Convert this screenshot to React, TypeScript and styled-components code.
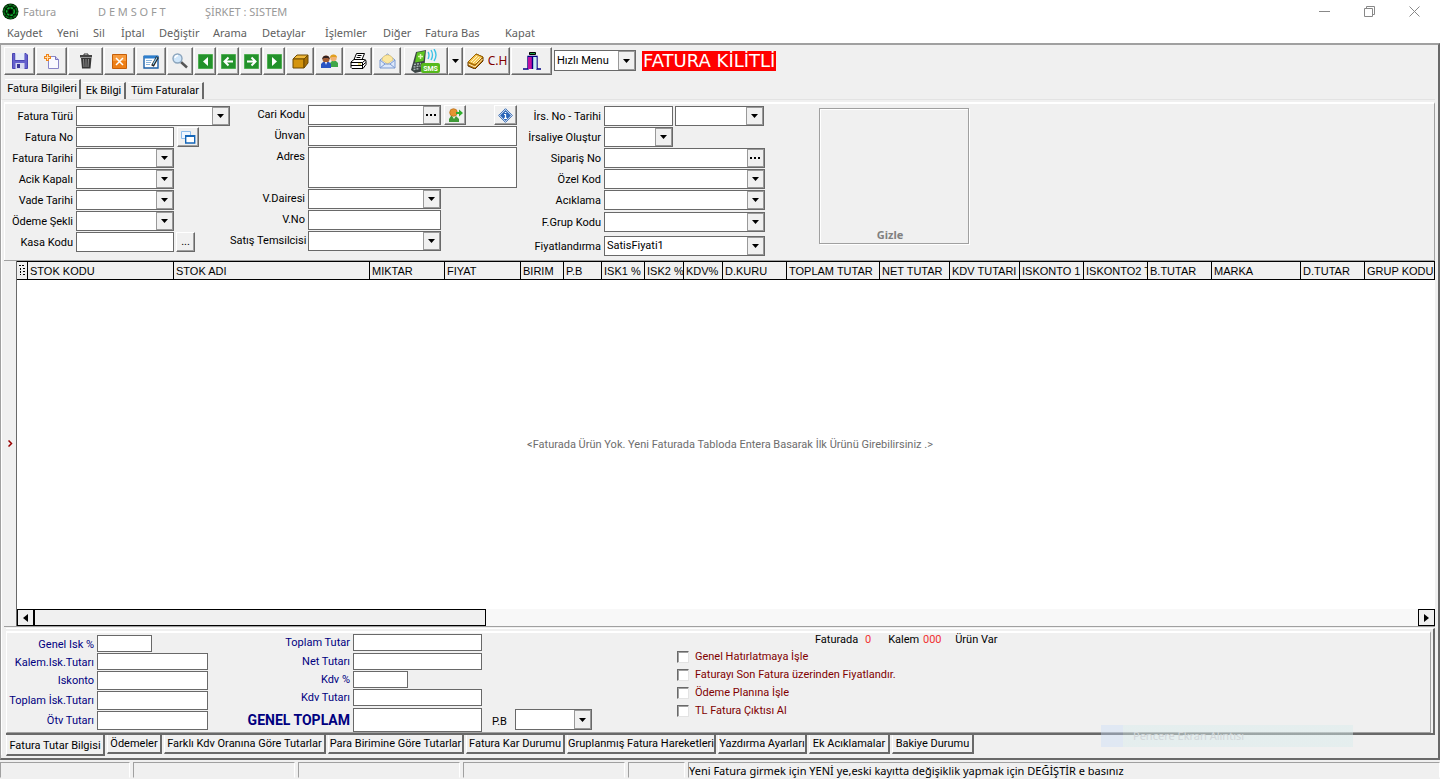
import React from "react";
import styled, { createGlobalStyle, css } from "styled-components";

const face = "#f0f0f0";
const edge = "#696969";
const shade = "#a0a0a0";
const sans = 'Roboto, "Liberation Sans", Arial, sans-serif';
const wide = '"Liberation Sans", Arial, sans-serif';
const ui = '"Noto Sans", "Open Sans", sans-serif';

const Global = createGlobalStyle`
  * { box-sizing: border-box; }
  body { margin: 0; background: #fff; font: 11px/14px ${sans}; color: #000; }
  button, input, select, textarea { font: inherit; color: inherit; margin: 0; padding: 0; border-radius: 0; }
  h1 { margin: 0; font-weight: 400; }
`;

const Window = styled.div`
  min-height: 100vh;
  display: flex;
  flex-direction: column;
  background: ${face};
  overflow: hidden;
  position: relative;
`;

const TitleBar = styled.header`
  display: flex;
  align-items: center;
  height: 23px;
  padding-left: 2px;
  background: #fff;
  color: #999;
  font: 11px/16px ${ui};
`;
const Title = styled.h1`
  display: flex;
  font-size: 11px;
  margin-left: 4px;
  flex: 1;
  white-space: pre;
`;
const TitlePart = styled.span<{ $w: number }>`
  width: ${(p) => p.$w}px;
  white-space: pre;
`;
const CaptionButton = styled.button`
  width: 45px;
  height: 22px;
  border: 0;
  background: none;
  display: flex;
  align-items: center;
  justify-content: center;
`;
const CaptionButtons = styled.div`
  display: flex;
  padding-right: 3px;
`;

const MenuBar = styled.nav`
  display: flex;
  height: 20px;
  padding-left: 7px;
  background: #fff;
`;
const MenuItem = styled.button<{ $w: number }>`
  width: ${(p) => p.$w}px;
  border: 0;
  background: none;
  color: #606060;
  font: 11px/18px ${ui};
  text-align: left;
  white-space: nowrap;
`;

const Frame = styled.main`
  flex: 1;
  display: flex;
  flex-direction: column;
  border-top: 2px solid ${shade};
  border-left: 1px solid ${shade};
  border-right: 2px solid ${edge};
  border-bottom: 2px solid ${edge};
`;

const ToolBar = styled.div`
  display: flex;
  height: 34px;
  padding: 2px 0 2px 3px;
  gap: 1px;
  align-items: stretch;
`;
const raised = css`
  background: ${face};
  border: 1px solid;
  border-color: #fff ${edge} ${edge} #fff;
  box-shadow: inset -1px -1px 0 ${shade};
`;
const ToolButton = styled.button<{ $w: number }>`
  ${raised}
  width: ${(p) => p.$w}px;
  height: 28px;
  display: flex;
  align-items: center;
  justify-content: center;
  gap: 4px;
  color: #800000;
  font: 12px/14px ${ui};
  flex: none;
`;
const ToolGroup = styled.div<{ $before?: number; $top?: number }>`
  display: flex;
  align-items: flex-start;
  margin-left: ${(p) => p.$before ?? 0}px;
  padding-top: ${(p) => p.$top ?? 0}px;
`;
const Locked = styled.strong`
  height: 20px;
  margin: 4px 0 0 5px;
  padding: 0 1px;
  background: #f00;
  color: #fff;
  font: 18px/20px "DejaVu Sans", Verdana, sans-serif;
  white-space: nowrap;
`;

const TopTabs = styled.div`
  display: flex;
  align-items: flex-end;
  height: 20px;
  padding-left: 4px;
  gap: 2px;
`;
const TopTab = styled.button<{ $w: number; $on?: boolean }>`
  width: ${(p) => p.$w}px;
  height: ${(p) => (p.$on ? 20 : 17)}px;
  padding-bottom: ${(p) => (p.$on ? 2 : 0)}px;
  border: 0;
  border-right: 2px solid ${edge};
  border-top: 1px solid #fff;
  background: ${face};
  white-space: nowrap;
`;

const Page = styled.section`
  flex: 1;
  display: flex;
  flex-direction: column;
  border-top: 1px solid #e3e3e3;
  border-left: 1px solid #fff;
  margin: 0 3px 3px 0;
`;
const Form = styled.form`
  display: flex;
  height: 158px;
  margin: 2px 0 0 2px;
  border-top: 2px solid #fff;
  border-left: 1px solid #fff;
  border-right: 1px solid ${shade};
`;
const Column = styled.div<{ $label: number; $rows: string; $before?: number; $top: number; $drop?: number }>`
  display: grid;
  grid-template-columns: ${(p) => p.$label}px max-content;
  grid-template-rows: ${(p) => p.$rows};
  column-gap: 3px;
  align-content: start;
  padding-top: ${(p) => p.$top}px;
  margin-left: ${(p) => p.$before ?? 0}px;
  > label {
    padding-top: ${(p) => p.$drop ?? 4}px;
  }
`;
const Label = styled.label`
  text-align: right;
  white-space: nowrap;
`;
const Controls = styled.div<{ $gap?: number }>`
  display: flex;
  align-items: flex-start;
  gap: ${(p) => p.$gap ?? 2}px;
`;
const TextBox = styled.input<{ $w: number; $h?: number }>`
  width: ${(p) => p.$w}px;
  height: ${(p) => p.$h ?? 20}px;
  border: 1px solid ${edge};
  background: #fff;
  padding: 0 2px;
`;
const TextArea = styled.textarea`
  width: 209px;
  height: 41px;
  border: 1px solid ${edge};
  resize: none;
  display: block;
`;
const PickWrap = styled.div<{ $w: number; $h?: number }>`
  position: relative;
  width: ${(p) => p.$w}px;
  height: ${(p) => p.$h ?? 20}px;
`;
const PickSelect = styled.select`
  width: 100%;
  height: 100%;
  appearance: none;
  border: 1px solid ${edge};
  background: #fff;
  padding-left: 2px;
`;
const PickArrow = styled.span`
  position: absolute;
  right: 1px;
  top: 1px;
  bottom: 1px;
  width: 17px;
  border: 1px solid #999;
  background: ${face};
  pointer-events: none;
  display: flex;
  align-items: center;
  justify-content: center;
`;
const LookupButton = styled.button`
  position: absolute;
  right: 1px;
  top: 1px;
  bottom: 1px;
  width: 17px;
  border: 1px solid #999;
  background: ${face};
  display: flex;
  align-items: center;
  justify-content: center;
`;
const SmallButton = styled.button<{ $w: number; $before?: number }>`
  ${raised}
  width: ${(p) => p.$w}px;
  height: 20px;
  margin-left: ${(p) => p.$before ?? 0}px;
  display: flex;
  align-items: center;
  justify-content: center;
`;
const Preview = styled.div`
  width: 150px;
  height: 136px;
  margin: 4px 0 0 54px;
  border: 1px solid ${shade};
  box-shadow: inset 1px 1px 0 #fff, 1px 1px 0 #fff;
  display: flex;
  align-items: flex-end;
  justify-content: center;
`;
const HideButton = styled.button`
  border: 0;
  background: none;
  color: #808080;
  padding-right: 8px;
  font: bold 11px/16px ${ui};
`;

const GridRow = styled.div`
  flex: 1;
  display: flex;
  margin-left: 2px;
  border-top: 1px solid ${shade};
  border-bottom: 1px solid ${shade};
`;
const Expander = styled.button`
  width: 12px;
  border: 0;
  background: ${face};
  display: flex;
  align-items: center;
  justify-content: center;
`;
const GridBox = styled.div`
  flex: 1;
  min-width: 0;
  display: flex;
  flex-direction: column;
  background: #fff;
  border-left: 1px solid ${edge};
  overflow: hidden;
`;
const Table = styled.table`
  width: 100%;
  table-layout: fixed;
  border-collapse: separate;
  border-spacing: 0;
  font-family: ${wide};
`;
const Th = styled.th`
  height: 19px;
  padding: 0 0 0 2px;
  border: solid #000;
  border-width: 1px 1px 1px 0;
  background: ${face};
  font-weight: 400;
  text-align: left;
  white-space: nowrap;
  overflow: hidden;
`;
const Empty = styled.p`
  flex: 1;
  margin: 0;
  padding-left: 8px;
  display: flex;
  align-items: center;
  justify-content: center;
  color: #6d6d6d;
`;
const ScrollBar = styled.div`
  display: flex;
  height: 17px;
  background: #f8f8f8;
`;
const ScrollButton = styled.button`
  width: 17px;
  border: 1px solid #000;
  background: ${face};
  display: flex;
  align-items: center;
  justify-content: center;
`;
const Thumb = styled.div`
  width: 452px;
  border: 1px solid #000;
  background: ${face};
`;
const Track = styled.div`
  flex: 1;
`;

const Totals = styled.form`
  display: flex;
  height: 107px;
  margin: 1px 0 0 4px;
  border-top: 1px solid #fff;
  border-bottom: 2px solid ${edge};
  border-right: 2px solid ${edge};
  padding: 2px 2px 0 0;
`;
const TotalsInner = styled.div`
  flex: 1;
  display: flex;
  border: 1px solid #fff;
  border-top-width: 2px;
  border-right-color: ${shade};
  border-bottom-color: ${shade};
`;
const Sums = styled(Column)`
  color: #000080;
`;
const GrandLabel = styled(Label)`
  font: bold 14px/20px ${sans};
`;
const Currency = styled.div`
  display: flex;
  align-items: flex-end;
  gap: 8px;
  margin-left: 10px;
  padding-bottom: 2px;
`;
const CurrencyLabel = styled.label`
  padding-bottom: 1px;
`;
const Options = styled.div`
  margin: 17px 0 0 85px;
  display: flex;
  flex-direction: column;
  gap: 4px;
  width: 138px;
  white-space: nowrap;
`;
const Option = styled.label`
  display: flex;
  gap: 6px;
  height: 14px;
  align-items: center;
  color: #800000;
`;
const Check = styled.input`
  appearance: none;
  flex: none;
  width: 12px;
  height: 12px;
  background: #fff;
  border: 1px solid;
  border-color: ${edge} #e3e3e3 #e3e3e3 ${edge};
  box-shadow: inset 1px 1px 0 ${shade};
`;
const Counter = styled.p`
  display: flex;
  margin: 0;
`;
const CountWord = styled.span<{ $before?: number }>`
  margin-left: ${(p) => p.$before ?? 0}px;
`;
const Red = styled.span<{ $w: number }>`
  color: #f03030;
  width: ${(p) => p.$w}px;
  text-align: center;
`;

const BottomTabs = styled.div`
  display: flex;
  height: 20px;
  padding-left: 4px;
  gap: 2px;
`;
const BottomTab = styled.button<{ $w: number; $on?: boolean }>`
  width: ${(p) => p.$w}px;
  height: ${(p) => (p.$on ? 21 : 19)}px;
  border: 0;
  border-left: 1px solid #fff;
  border-right: 2px solid ${edge};
  border-bottom: 2px solid ${edge};
  padding-top: ${(p) => (p.$on ? 3 : 0)}px;
  background: ${face};
  white-space: nowrap;
`;

const StatusBar = styled.footer`
  display: flex;
  gap: 3px;
  height: 19px;
  padding: 2px 0 1px;
  font: 11px/16px ${ui};
`;
const StatusCell = styled.div<{ $w?: number }>`
  ${(p) => (p.$w ? `width: ${p.$w}px` : "flex: 1")};
  border: 1px solid;
  border-color: ${shade} #fff ${face} ${shade};
  white-space: nowrap;
`;

const Toast = styled.div`
  position: absolute;
  right: 87px;
  bottom: 32px;
  width: 252px;
  height: 22px;
  padding-left: 32px;
  background: linear-gradient(90deg, #c8dcf866 22px, #d8ecec77 22px);
  color: #d2d7da;
  font: 11px/22px ${ui};
`;

const Down = () => (
  <svg width="7" height="4" viewBox="0 0 7 4" aria-hidden="true"><path d="M0 0h7L3.500 4z" fill="#000" /></svg>
);
const Dots = () => (
  <svg width="11" height="2" viewBox="0 0 11 2" aria-hidden="true"><path d="M0 0h2v2H0zM4 0h2v2H4zM8 0h2v2H8z" fill="#000" /></svg>
);

const LogoIcon = () => (
  <svg width="17" height="17" viewBox="0 0 17 17" aria-hidden="true">
    <circle cx="8.500" cy="8.500" r="8" fill="#020" />
    <circle cx="8.500" cy="8.500" r="6.500" fill="none" stroke="#0a7a20" strokeWidth="1.500" strokeDasharray="3 1" />
    <circle cx="8.500" cy="8.500" r="3.800" fill="none" stroke="#10b034" strokeWidth="1.500" strokeDasharray="2.500 1" />
    <circle cx="8.500" cy="8.500" r="1.800" fill="#000" />
  </svg>
);
const SaveIcon = () => (
  <svg width="16" height="16" viewBox="0 0 16 16" aria-hidden="true">
    <path d="M.5.500h2.500v7h9.500v-7h1.500l1.500 1.500v13.500H.5z" fill="#6460cc" stroke="#4a46b4" />
    <path d="M3.500 0h9v7h-9z" fill="#e6ecfa" />
    <path d="M3.500 10h9v6h-9z" fill="#d8daf0" />
    <path d="M5 11h3v4H5z" fill="#3a3698" />
  </svg>
);
const NewIcon = () => (
  <svg width="18" height="17" viewBox="0 0 18 17" aria-hidden="true">
    <path d="M5.500 3.500h7l3 3v9h-10z" fill="#fafaff" stroke="#8a86c8" />
    <path d="M12.500 3.500v3h3" fill="#c9c6ec" stroke="#7773bd" />
    <path d="M4.500 1v7M1 4.500h7" stroke="#f0861c" strokeWidth="3" />
    <path d="M4.500 2v5M2 4.500h5" stroke="#ffe0b0" />
  </svg>
);
const TrashIcon = () => (
  <svg width="14" height="16" viewBox="0 0 14 16" aria-hidden="true">
    <path d="M5 2V1h4v1" fill="none" stroke="#333" />
    <path d="M1 2h12v2.500H1z" fill="#444" />
    <path d="M2 5h10.500l-1 10.500h-8.500z" fill="#363636" />
    <path d="M4.500 6l.5 8M7 6v8M9.500 6L9 14" stroke="#8c8c8c" />
  </svg>
);
const CancelIcon = () => (
  <svg width="15" height="15" viewBox="0 0 15 15" aria-hidden="true">
    <path d="M.5.500h14v14H.5z" fill="#ee7f16" stroke="#c65f08" />
    <path d="M1 1h13v6H1z" fill="#f79a3c" />
    <path d="M4 4l7 7M11 4l-7 7" stroke="#fff" strokeWidth="1.500" />
  </svg>
);
const EditIcon = () => (
  <svg width="17" height="15" viewBox="0 0 17 15" aria-hidden="true">
    <path d="M1 2.500h14V14H1z" fill="#fff" stroke="#1b5fa8" strokeWidth="1.400" />
    <path d="M1 1.500h14v3H1z" fill="#2d7fce" />
    <path d="M3 6.500h6M3 8.500h5M3 10.500h4" stroke="#8ab4dc" />
    <path d="M14.500 3l-5 9" stroke="#222" strokeWidth="3" />
    <path d="M14 3.500l-4 7" stroke="#8fd0f8" strokeWidth="1.200" />
  </svg>
);
const SearchIcon = () => (
  <svg width="16" height="16" viewBox="0 0 16 16" aria-hidden="true">
    <path d="M9 9l6 5.500" stroke="#555" strokeWidth="2.500" />
    <circle cx="5.500" cy="5.500" r="4.500" fill="#cfe6fa" stroke="#8aa4bc" strokeWidth="1.400" />
    <path d="M3 5a3 3 0 013-2.500" stroke="#fff" fill="none" strokeWidth="1.400" />
  </svg>
);
const NavIcon = ({ d, line }: { d: string; line?: boolean }) => (
  <svg width="15" height="15" viewBox="0 0 15 15" aria-hidden="true">
    <path d="M.5.500h14v14H.5z" fill="#23922b" stroke="#4fae52" />
    <path d={d} fill={line ? "none" : "#fff"} stroke={line ? "#fff" : "none"} strokeWidth="2" />
  </svg>
);
const BoxIcon = () => (
  <svg width="17" height="15" viewBox="0 0 17 15" aria-hidden="true">
    <path d="M1 5l4-4h11l-4 4z" fill="#f0b93a" stroke="#6e4a00" />
    <path d="M1 5h11v9H1z" fill="#d4940c" stroke="#6e4a00" />
    <path d="M12 5l4-4v8l-4 5z" fill="#a66f04" stroke="#6e4a00" />
  </svg>
);
const PeopleIcon = () => (
  <svg width="17" height="15" viewBox="0 0 17 15" aria-hidden="true">
    <path d="M9 13V9l2-2h4l2 2v4z" fill="#3fa648" />
    <circle cx="12.500" cy="4" r="3.200" fill="#f0b070" />
    <path d="M9 4a3.500 3.500 0 017 0l-1-1h-4z" fill="#e0a020" />
    <path d="M0 14V10l2-2h6l2 2v4z" fill="#2854c4" />
    <circle cx="5" cy="5" r="3.500" fill="#a05a34" />
    <path d="M1.200 5.500a3.800 3.800 0 017.600 0L7 4H3z" fill="#302020" />
    <path d="M4 8l1 3 1-3z" fill="#fff" />
  </svg>
);
const PrintIcon = () => (
  <svg width="17" height="16" viewBox="0 0 17 16" aria-hidden="true">
    <path d="M6.500.500h8l-2.500 6H4z" fill="#fff" stroke="#000" />
    <path d="M7.500 2.500h4M6.500 4.500h4" stroke="#000" />
    <path d="M1 9l3-2.500h10l2 1v4l-3 4H2l-1-1z" fill="#fff" stroke="#000" />
    <path d="M1 9.500h11.500l3-2.500M1 12.500h11.500l3-3M12.500 9.500v6" stroke="#000" fill="none" />
    <path d="M8 11h3" stroke="#d8c000" />
  </svg>
);
const MailIcon = () => (
  <svg width="17" height="16" viewBox="0 0 17 16" aria-hidden="true">
    <path d="M1 7l7.500-6L16 7v8H1z" fill="#dce8fb" stroke="#7d9bd0" />
    <path d="M3 7c0-3 3-5 5.500-5S14 4 14 7l-5.500 4z" fill="#fbe7a0" stroke="#d8b860" strokeWidth=".6" />
    <path d="M1 7l5 4h5l5-4M1 15l5-4M16 15l-5-4" fill="none" stroke="#7d9bd0" />
  </svg>
);
const SmsIcon = () => (
  <svg width="32" height="25" viewBox="0 0 32 25" aria-hidden="true">
    <path d="M6 3l10-2-2 21-9 2-4-3z" fill="#3b4444" />
    <path d="M7 3.500l8-1.500-1.500 10-8.500 1.500z" fill="#5ec522" />
    <path d="M10.500 5v5M8 7.500h5" stroke="#dff7b8" strokeWidth="1.500" />
    <path d="M4 15.500l7-1M3.500 18l7-1M3.500 20.500l6-1" stroke="#a8b4b4" strokeWidth="1.500" strokeDasharray="2 1" />
    <path d="M18 3q2 3 0 7M21 1q3 5 0 10M24 0q4 6 0 12" fill="none" stroke="#3ec3e6" strokeWidth="1.400" />
    <rect x="11" y="14" width="19" height="10" rx="2" fill="#55b91c" />
    <text x="20.500" y="22" textAnchor="middle" fontFamily="Roboto, sans-serif" fontSize="7" fontWeight="700" fill="#fff">SMS</text>
  </svg>
);
const LedgerIcon = () => (
  <svg width="17" height="16" viewBox="0 0 17 16" aria-hidden="true">
    <path d="M1 9l8-8 7 3v4l-8 8-7-3z" fill="#c77f10" stroke="#5c3500" />
    <path d="M1 9l8-8 7 3-8 8z" fill="#f4c552" stroke="#9c6400" />
    <path d="M4 9l6-6M6 10l6-6M9 10l5-5" stroke="#fff3c0" />
    <path d="M1.500 11l6.500 3 7.500-8" fill="none" stroke="#fff3c0" />
  </svg>
);
const DoorIcon = () => (
  <svg width="18" height="18" viewBox="0 0 18 18" aria-hidden="true">
    <path d="M6.500.500h6v2h-6z" fill="#1aa040" stroke="#000" />
    <path d="M0 17h5V4.500h9V17h4" fill="none" stroke="#000080" strokeWidth="1.400" />
    <path d="M5 5h4v12H5z" fill="#c010a0" />
    <path d="M9.500 5h4v12h-4z" fill="#c8eef4" />
    <path d="M9.500 4.500V17" stroke="#000080" strokeWidth="1.400" />
  </svg>
);
const CopyIcon = () => (
  <svg width="15" height="13" viewBox="0 0 15 13" aria-hidden="true">
    <path d="M.5.500h9v7h-9z" fill="#eef6ff" stroke="#8cbcec" />
    <path d="M4.700 4.700h9v7.300h-9z" fill="#fff" stroke="#1466b8" strokeWidth="1.400" />
    <path d="M4 4h10v2H4z" fill="#1466b8" />
  </svg>
);
const AddUserIcon = () => (
  <svg width="15" height="15" viewBox="0 0 15 15" aria-hidden="true">
    <path d="M1 14v-3l2-3h5l3 3v3z" fill="#3f9a38" />
    <path d="M4 8l2 3 2-3z" fill="#e8f4e0" />
    <circle cx="5.500" cy="4.500" r="3.800" fill="#e59432" stroke="#b86c14" strokeWidth=".7" />
    <path d="M8 4h3V1.500L15 5l-4 3.500V6H8z" fill="#2fae2c" />
  </svg>
);
const InfoIcon = () => (
  <svg width="15" height="15" viewBox="0 0 15 15" aria-hidden="true">
    <path d="M7.500.7l6.800 6.800-6.800 6.800L.7 7.500z" fill="#fff" stroke="#2660b0" />
    <path d="M7.500 2l5.500 5.500-5.500 5.500L2 7.500z" fill="#2b66b8" />
    <path d="M6 6.500h1.500V10M6 10.300h3M6.800 4.500h1.500" stroke="#fff" fill="none" strokeWidth="1.200" />
  </svg>
);

type PickProps = { id?: string; w: number; h?: number; value?: string; label?: string };
const Pick = ({ id, w, h, value, label }: PickProps) => (
  <PickWrap $w={w} $h={h}>
    <PickSelect id={id} aria-label={label}>
      <option>{value ?? ""}</option>
    </PickSelect>
    <PickArrow><Down /></PickArrow>
  </PickWrap>
);
const Lookup = ({ id, w, label }: { id: string; w: number; label: string }) => (
  <PickWrap $w={w}>
    <TextBox id={id} $w={w} />
    <LookupButton type="button" aria-label={label}><Dots /></LookupButton>
  </PickWrap>
);

const menu: [string, number][] = [
  ["Kaydet", 50], ["Yeni", 36], ["Sil", 28], ["İptal", 38], ["Değiştir", 54], ["Arama", 49],
  ["Detaylar", 63], ["İşlemler", 58], ["Diğer", 42], ["Fatura Bas", 80], ["Kapat", 50],
];
const tools: [string, number, React.ReactNode][] = [
  ["Kaydet", 31, <SaveIcon />],
  ["Yeni", 31, <NewIcon />],
  ["Sil", 35, <TrashIcon />],
  ["İptal", 31, <CancelIcon />],
  ["Değiştir", 30, <EditIcon />],
  ["Arama", 26, <SearchIcon />],
  ["İlk", 22, <NavIcon d="M10 3v9L5 7.500z" />],
  ["Önceki", 22, <NavIcon line d="M12 7.500H4M7.500 3.500l-4 4 4 4" />],
  ["Sonraki", 22, <NavIcon line d="M3 7.500h8M7.500 3.500l4 4-4 4" />],
  ["Son", 22, <NavIcon d="M5 3v9l5-4.500z" />],
  ["Stok", 28, <BoxIcon />],
  ["Cariler", 28, <PeopleIcon />],
  ["Yazdır", 28, <PrintIcon />],
  ["E-posta", 28, <MailIcon />],
];
const columns: [string, number?][] = [
  ["", 11], ["STOK KODU", 146], ["STOK ADI", 196], ["MIKTAR", 75], ["FIYAT", 76], ["BIRIM", 43], ["P.B", 38],
  ["ISK1 %", 43], ["ISK2 %", 39], ["KDV%", 39], ["D.KURU", 64], ["TOPLAM TUTAR", 93], ["NET TUTAR", 70],
  ["KDV TUTARI", 70], ["ISKONTO 1", 64], ["ISKONTO2 T", 64], ["B.TUTAR", 64], ["MARKA", 89], ["D.TUTAR", 64],
  ["GRUP KODU"],
];
const bottomTabs: [string, number][] = [
  ["Fatura Tutar Bilgisi", 99], ["Ödemeler", 55], ["Farklı Kdv Oranına Göre Tutarlar", 162],
  ["Para Birimine Göre Tutarlar", 136], ["Fatura Kar Durumu", 99], ["Gruplanmış Fatura Hareketleri", 149],
  ["Yazdırma Ayarları", 89], ["Ek Acıklamalar", 81], ["Bakiye Durumu", 82],
];
const options = ["Genel Hatırlatmaya İşle", "Faturayı Son Fatura üzerinden Fiyatlandır.", "Ödeme Planına İşle", "TL Fatura Çıktısı Al"];

export default function App() {
  return (
    <Window>
      <Global />
      <TitleBar>
        <LogoIcon />
        <Title>
          <TitlePart $w={75}>Fatura</TitlePart>
          <TitlePart $w={107}>D E M S O F T</TitlePart>
          <span>ŞİRKET : SISTEM</span>
        </Title>
        <CaptionButtons>
          <CaptionButton aria-label="Simge durumuna küçült">
            <svg width="11" height="11" viewBox="0 0 11 11"><path d="M0 5.500h11" stroke="#888" /></svg>
          </CaptionButton>
          <CaptionButton aria-label="Önceki boyut">
            <svg width="11" height="11" viewBox="0 0 11 11"><path d="M.5 2.500h8v8h-8zM2.500 2V.5h8v8H9" fill="none" stroke="#888" /></svg>
          </CaptionButton>
          <CaptionButton aria-label="Kapat">
            <svg width="11" height="11" viewBox="0 0 11 11"><path d="M.5.500l10 10M10.500.500l-10 10" stroke="#888" /></svg>
          </CaptionButton>
        </CaptionButtons>
      </TitleBar>
      <MenuBar>
        {menu.map(([name, w]) => <MenuItem key={name} $w={w}>{name}</MenuItem>)}
      </MenuBar>

      <Frame>
        <ToolBar>
          {tools.map(([name, w, icon]) => <ToolButton key={name} $w={w} aria-label={name}>{icon}</ToolButton>)}
          <ToolGroup $before={2}>
            <ToolButton $w={44} aria-label="SMS"><SmsIcon /></ToolButton>
            <ToolButton $w={15} aria-label="SMS seçenekleri"><Down /></ToolButton>
          </ToolGroup>
          <ToolButton $w={46}><LedgerIcon />C.H</ToolButton>
          <ToolButton $w={41} aria-label="Çıkış"><DoorIcon /></ToolButton>
          <ToolGroup $before={1} $top={3}><Pick label="Hızlı Menu" w={82} h={21} value="Hızlı Menu" /></ToolGroup>
          <Locked>FATURA KİLİTLİ</Locked>
        </ToolBar>

        <TopTabs role="tablist">
          <TopTab role="tab" $w={76} $on>Fatura Bilgileri</TopTab>
          <TopTab role="tab" $w={43}>Ek Bilgi</TopTab>
          <TopTab role="tab" $w={76}>Tüm Faturalar</TopTab>
        </TopTabs>

        <Page>
          <Form>
            <Column $label={68} $rows="repeat(7, 21px)" $top={2}>
              <Label htmlFor="tur">Fatura Türü</Label>
              <Pick id="tur" w={154} />
              <Label htmlFor="no">Fatura No</Label>
              <Controls $gap={3}>
                <TextBox id="no" $w={98} />
                <SmallButton type="button" $w={22} aria-label="Kopyala"><CopyIcon /></SmallButton>
              </Controls>
              <Label htmlFor="tarih">Fatura Tarihi</Label>
              <Pick id="tarih" w={98} />
              <Label htmlFor="acik">Acik Kapalı</Label>
              <Pick id="acik" w={98} />
              <Label htmlFor="vade">Vade Tarihi</Label>
              <Pick id="vade" w={98} />
              <Label htmlFor="odeme">Ödeme Şekli</Label>
              <Pick id="odeme" w={98} />
              <Label htmlFor="kasa">Kasa Kodu</Label>
              <Controls>
                <TextBox id="kasa" $w={98} />
                <SmallButton type="button" $w={19}>...</SmallButton>
              </Controls>
            </Column>

            <Column $label={75} $rows="21px 21px 42px 21px 21px 21px" $top={1} $drop={3}>
              <Label htmlFor="cari">Cari Kodu</Label>
              <Controls $gap={3}>
                <Lookup id="cari" w={133} label="Cari seç" />
                <SmallButton type="button" $w={22} aria-label="Cari ekle"><AddUserIcon /></SmallButton>
                <SmallButton type="button" $w={23} $before={25} aria-label="Bilgi"><InfoIcon /></SmallButton>
              </Controls>
              <Label htmlFor="unvan">Ünvan</Label>
              <TextBox id="unvan" $w={209} />
              <Label htmlFor="adres">Adres</Label>
              <TextArea id="adres" />
              <Label htmlFor="daire">V.Dairesi</Label>
              <Pick id="daire" w={133} />
              <Label htmlFor="vno">V.No</Label>
              <TextBox id="vno" $w={133} />
              <Label htmlFor="satis">Satış Temsilcisi</Label>
              <Pick id="satis" w={133} />
            </Column>

            <Column $label={73} $rows="21px 21px 21px 21px 22px 24px 21px" $top={2} $before={11}>
              <Label htmlFor="irs">İrs. No - Tarihi</Label>
              <Controls>
                <TextBox id="irs" $w={69} />
                <Pick label="İrsaliye tarihi" w={89} />
              </Controls>
              <Label htmlFor="olustur">İrsaliye Oluştur</Label>
              <Pick id="olustur" w={69} />
              <Label htmlFor="siparis">Sipariş No</Label>
              <Lookup id="siparis" w={161} label="Sipariş seç" />
              <Label htmlFor="ozel">Özel Kod</Label>
              <Pick id="ozel" w={161} />
              <Label htmlFor="acikl">Acıklama</Label>
              <Pick id="acikl" w={161} />
              <Label htmlFor="grup">F.Grup Kodu</Label>
              <Pick id="grup" w={161} />
              <Label htmlFor="fiyat">Fiyatlandırma</Label>
              <Pick id="fiyat" w={161} value="SatisFiyati1" />
            </Column>

            <Preview><HideButton type="button">Gizle</HideButton></Preview>
          </Form>

          <GridRow>
            <Expander aria-label="Paneli aç">
              <svg width="5" height="7" viewBox="0 0 5 7"><path d="M.5.500l3 3-3 3" fill="none" stroke="#900" strokeWidth="1.500" /></svg>
            </Expander>
            <GridBox>
              <Table>
                <colgroup>{columns.map(([name, w]) => <col key={name} width={w} />)}</colgroup>
                <thead>
                  <tr>
                    {columns.map(([name]) => (
                      <Th key={name} scope="col">
                        {name || <svg width="6" height="11" viewBox="0 0 6 11" aria-hidden="true"><path d="M0 1.500h2M3 1.500h3M1.500 4v7" stroke="#000" strokeDasharray="2 1" /><path d="M4 4.500h2M4 7.500h2M4 10.500h2" stroke="#000" /></svg>}
                      </Th>
                    ))}
                  </tr>
                </thead>
              </Table>
              <Empty>&lt;Faturada Ürün Yok. Yeni Faturada Tabloda Entera Basarak İlk Ürünü Girebilirsiniz .&gt;</Empty>
              <ScrollBar>
                <ScrollButton aria-label="Sola kaydır"><svg width="5" height="8" viewBox="0 0 5 8"><path d="M5 0v8L0 4z" /></svg></ScrollButton>
                <Thumb />
                <Track />
                <ScrollButton aria-label="Sağa kaydır"><svg width="5" height="8" viewBox="0 0 5 8"><path d="M0 0v8l5-4z" /></svg></ScrollButton>
              </ScrollBar>
            </GridBox>
          </GridRow>

          <Totals>
            <TotalsInner>
              <Sums $label={87} $rows="18px 18px 20px 20px 20px" $top={2} $drop={3}>
                <Label htmlFor="gisk">Genel Isk %</Label>
                <TextBox id="gisk" $w={55} $h={17} />
                <Label htmlFor="kisk">Kalem.Isk.Tutarı</Label>
                <TextBox id="kisk" $w={111} $h={17} />
                <Label htmlFor="isk">Iskonto</Label>
                <TextBox id="isk" $w={111} $h={19} />
                <Label htmlFor="tisk">Toplam İsk.Tutarı</Label>
                <TextBox id="tisk" $w={111} $h={19} />
                <Label htmlFor="otv">Ötv Tutarı</Label>
                <TextBox id="otv" $w={111} $h={19} />
              </Sums>
              <Sums $label={103} $rows="19px 18px 18px 19px 24px" $top={1} $before={39} $drop={2}>
                <Label htmlFor="top">Toplam Tutar</Label>
                <TextBox id="top" $w={129} $h={17} />
                <Label htmlFor="net">Net Tutarı</Label>
                <TextBox id="net" $w={129} $h={17} />
                <Label htmlFor="kdv">Kdv %</Label>
                <TextBox id="kdv" $w={55} $h={17} />
                <Label htmlFor="kdvt">Kdv Tutarı</Label>
                <TextBox id="kdvt" $w={129} $h={17} />
                <GrandLabel htmlFor="genel">GENEL TOPLAM</GrandLabel>
                <TextBox id="genel" $w={129} $h={24} />
              </Sums>
              <Currency>
                <CurrencyLabel htmlFor="pb">P.B</CurrencyLabel>
                <Pick id="pb" w={77} h={21} />
              </Currency>
              <Options>
                {options.map((name) => <Option key={name}><Check type="checkbox" />{name}</Option>)}
              </Options>
              <Counter>
                <CountWord>Faturada</CountWord><Red $w={20}>0</Red>
                <CountWord $before={10}>Kalem</CountWord><Red $w={26}>000</Red>
                <CountWord $before={10}>Ürün Var</CountWord>
              </Counter>
            </TotalsInner>
          </Totals>

          <BottomTabs role="tablist">
            {bottomTabs.map(([name, w], i) => <BottomTab key={name} role="tab" $w={w} $on={i === 0}>{name}</BottomTab>)}
          </BottomTabs>
        </Page>
      </Frame>

      <StatusBar>
        <StatusCell $w={130} />
        <StatusCell $w={162} />
        <StatusCell $w={162} />
        <StatusCell $w={162} />
        <StatusCell $w={57} />
        <StatusCell>Yeni Fatura girmek için YENİ ye,eski kayıtta değişiklik yapmak için DEĞİŞTİR e basınız</StatusCell>
      </StatusBar>
      <Toast>Pencere Ekran Alıntısı</Toast>
    </Window>
  );
}
